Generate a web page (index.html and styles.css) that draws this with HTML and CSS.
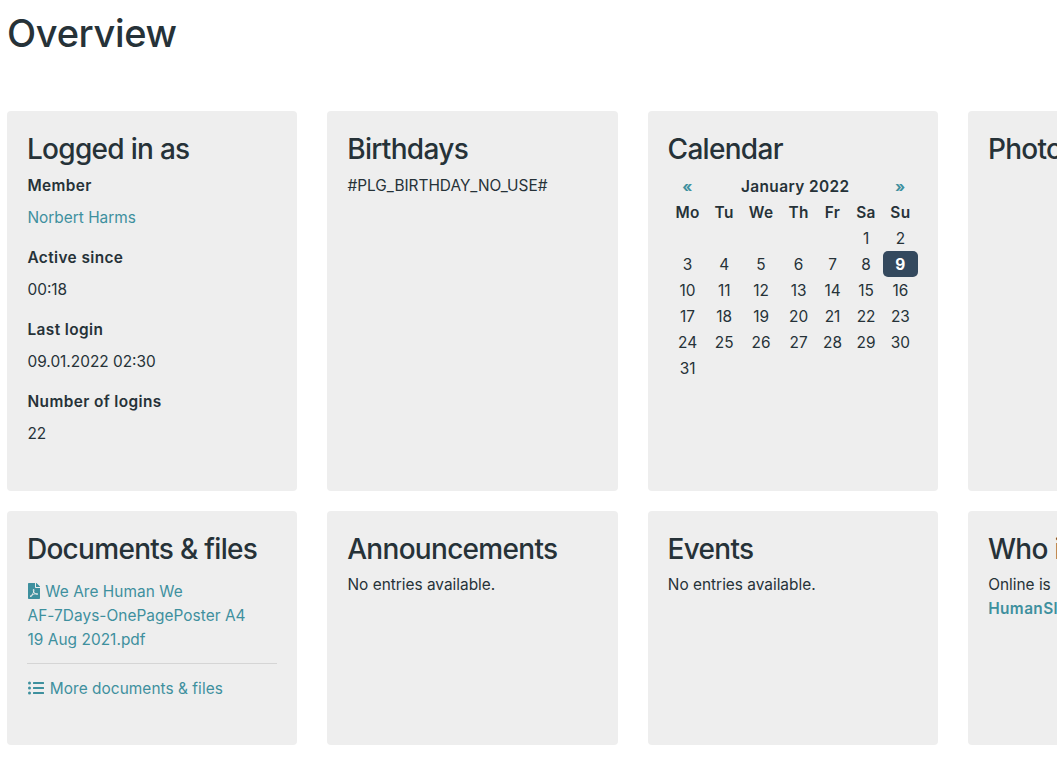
FILE: index.html
```html
<!DOCTYPE html>
<html lang="en">
<head>
<meta charset="utf-8">
<title>Overview</title>
<link rel="stylesheet" href="styles.css">
</head>
<body>
<h1 class="page-title">Overview</h1>
<div class="cards">
  <section class="card">
    <h3>Logged in as</h3>
    <dl class="facts">
      <dt>Member</dt><dd><a href="#">Norbert Harms</a></dd>
      <dt>Active since</dt><dd>00:18</dd>
      <dt>Last login</dt><dd>09.01.2022 02:30</dd>
      <dt>Number of logins</dt><dd>22</dd>
    </dl>
  </section>
  <section class="card">
    <h3>Birthdays</h3>
    <p>#PLG_BIRTHDAY_NO_USE#</p>
  </section>
  <section class="card">
    <h3>Calendar</h3>
    <table class="cal">
      <thead>
        <tr class="cal-nav"><th><a href="#">«</a></th><th colspan="5">January 2022</th><th><a href="#">»</a></th></tr>
        <tr><th>Mo</th><th>Tu</th><th>We</th><th>Th</th><th>Fr</th><th>Sa</th><th>Su</th></tr>
      </thead>
      <tbody>
        <tr><td></td><td></td><td></td><td></td><td></td><td>1</td><td>2</td></tr>
        <tr><td>3</td><td>4</td><td>5</td><td>6</td><td>7</td><td>8</td><td class="today">9</td></tr>
        <tr><td>10</td><td>11</td><td>12</td><td>13</td><td>14</td><td>15</td><td>16</td></tr>
        <tr><td>17</td><td>18</td><td>19</td><td>20</td><td>21</td><td>22</td><td>23</td></tr>
        <tr><td>24</td><td>25</td><td>26</td><td>27</td><td>28</td><td>29</td><td>30</td></tr>
        <tr><td>31</td><td></td><td></td><td></td><td></td><td></td><td></td></tr>
      </tbody>
    </table>
  </section>
  <section class="card">
    <h3>Photos</h3>
  </section>
  <section class="card">
    <h3>Documents &amp; files</h3>
    <ul class="files">
      <li><a href="#"><svg class="icon icon-pdf" viewBox="0 0 384 512" aria-hidden="true"><path d="M181.9 256.1c-5-16-4.9-46.9-2-46.9 8.4 0 7.6 36.9 2 46.9zm-1.7 47.2c-7.7 20.2-17.3 43.3-28.4 62.7 18.3-7 39-17.2 62.9-21.9-12.7-9.6-24.9-23.4-34.5-40.8zM86.1 428.1c0 .8 13.2-5.4 34.9-40.2-6.7 6.3-29.1 24.5-34.9 40.2zM248 160h136v328c0 13.3-10.7 24-24 24H24c-13.3 0-24-10.7-24-24V24C0 10.7 10.7 0 24 0h200v136c0 13.2 10.8 24 24 24zm-8 171.8c-20-12.2-33.3-29-42.7-53.8 4.5-18.5 11.6-46.6 6.2-64.2-4.7-29.4-42.4-26.5-47.8-6.8-5 18.3-.4 44.1 8.1 77-11.6 27.6-28.7 64.6-40.8 85.8-.1 0-.1.1-.2.1-27.1 13.9-73.6 44.5-54.5 68 5.6 6.9 16 10 21.5 10 17.9 0 35.7-18 61.1-61.8 25.8-8.5 54.1-19.1 79-23.2 21.7 11.8 47.1 19.5 64 19.5 29.2 0 31.2-32 19.7-43.4-13.9-13.6-54.3-9.7-73.6-7.2zM377 105L279 7c-4.5-4.5-10.6-7-17-7h-6v128h128v-6.1c0-6.3-2.5-12.4-7-16.9zm-74.1 255.3c4.1-2.7-2.5-11.9-42.8-9 37.1 15.8 42.8 9 42.8 9z"/></svg> We Are Human We<br>AF-7Days-OnePagePoster A4<br>19 Aug 2021.pdf</a></li>
      <li><a href="#"><svg class="icon icon-list" viewBox="0 0 512 512" aria-hidden="true"><path d="M48 48a48 48 0 1 0 48 48 48 48 0 0 0-48-48zm0 160a48 48 0 1 0 48 48 48 48 0 0 0-48-48zm0 160a48 48 0 1 0 48 48 48 48 0 0 0-48-48zm448 16H176a16 16 0 0 0-16 16v32a16 16 0 0 0 16 16h320a16 16 0 0 0 16-16v-32a16 16 0 0 0-16-16zm0-320H176a16 16 0 0 0-16 16v32a16 16 0 0 0 16 16h320a16 16 0 0 0 16-16V80a16 16 0 0 0-16-16zm0 160H176a16 16 0 0 0-16 16v32a16 16 0 0 0 16 16h320a16 16 0 0 0 16-16v-32a16 16 0 0 0-16-16z"/></svg> More documents &amp; files</a></li>
    </ul>
  </section>
  <section class="card">
    <h3>Announcements</h3>
    <p>No entries available.</p>
  </section>
  <section class="card">
    <h3>Events</h3>
    <p>No entries available.</p>
  </section>
  <section class="card">
    <h3>Who is online</h3>
    <p>Online is<br><a class="strong" href="#">HumanSl</a></p>
  </section>
</div>
</body>
</html>
```

FILE: styles.css
```css
html, body {
  margin: 0;
  height: 760px;
  overflow: hidden;
  background: #fff;
}
body {
  padding: 0 7.1px;
  font-family: Inter, "Liberation Sans", sans-serif;
  font-size: 15.4px;
  line-height: 24px;
  color: #263238;
}
a {
  color: #3e909e;
  text-decoration: none;
}
.page-title {
  margin: 0 0 54px;
  padding-top: 9px;
  font-size: 38px;
  line-height: 48px;
  font-weight: 500;
  letter-spacing: -0.35px;
}
.cards {
  display: grid;
  grid-template-columns: repeat(4, 290.33px);
  gap: 20px 30px;
}
.card {
  background: #eee;
  border-radius: 4px;
  padding: 21px 20px 29px 20.4px;
}
.card h3 {
  margin: 0 0 7px -0.6px;
  padding-top: 1px;
  font-size: 28px;
  line-height: 33.6px;
  font-weight: 500;
  letter-spacing: -0.7px;
}
.card p {
  margin: 0 0 0 -0.3px;
}
.strong {
  font-weight: 600;
  letter-spacing: 0.4px;
}
.facts {
  margin: 0;
}
.facts dt {
  margin-bottom: 8px;
  font-weight: 600;
  letter-spacing: 0.4px;
}
.facts dd {
  margin: 0 0 16px;
}
.cal {
  width: 100%;
  margin: -0.4px 0 0 -0.4px;
  border-collapse: collapse;
  text-align: center;
}
.cal th, .cal td {
  box-sizing: border-box;
  height: 26px;
  padding: 1px 4px 0;
  line-height: 24px;
}
.cal th {
  font-weight: 600;
  letter-spacing: 0.4px;
}
.cal-nav a {
  font-weight: 700;
}
.cal .today {
  background: #34495e;
  border-radius: 5px;
  color: #fff;
  font-weight: 700;
}
.files {
  list-style: none;
  margin: 14px 0 4px;
  padding: 0;
  letter-spacing: 0.05px;
}
.files li {
  padding: 0 0 11px;
}
.files li + li {
  border-top: 1px solid #d5d5d5;
  padding-top: 13px;
}
.icon {
  display: inline-block;
  height: 16px;
  fill: currentColor;
  vertical-align: -2px;
  margin-left: 0.5px;
}
.icon-pdf {
  width: 12px;
  margin-right: 1px;
}
.icon-list {
  width: 16px;
  margin-right: 1.5px;
}
```
